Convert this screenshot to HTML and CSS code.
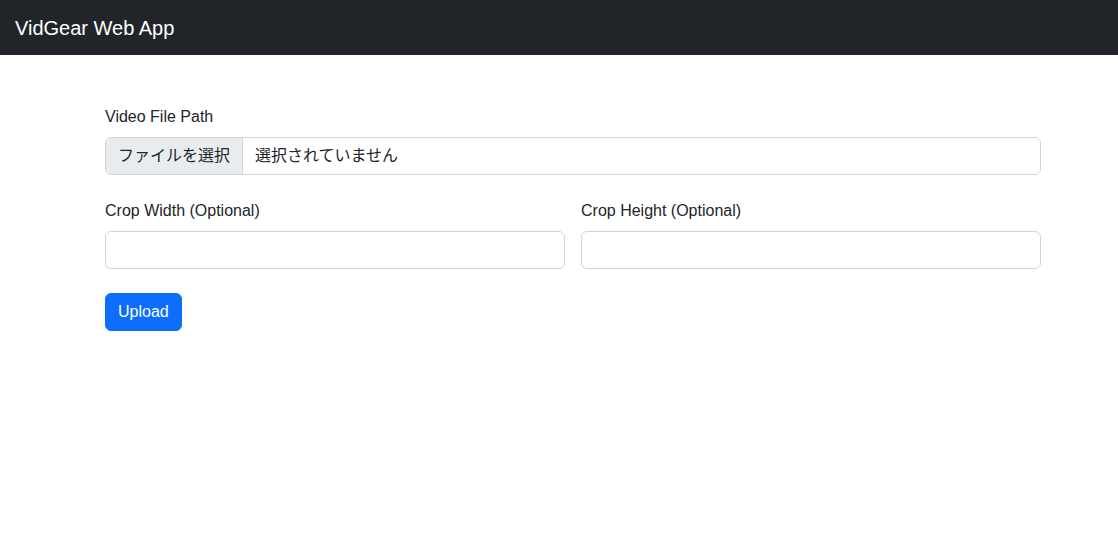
FILE: index.html
```html
<!DOCTYPE html>
<html lang="ja">
<head>
<meta charset="utf-8">
<title>VidGear Web App</title>
<link rel="stylesheet" href="styles.css">
</head>
<body>
<nav class="navbar">
  <span class="brand">VidGear Web App</span>
</nav>
<main class="container">
  <form class="form">
    <div class="field">
      <label class="label">Video File Path</label>
      <div class="file-control">
        <span class="file-btn">ファイルを選択</span>
        <span class="file-name">選択されていません</span>
      </div>
    </div>
    <div class="row">
      <div class="field col">
        <label class="label">Crop Width (Optional)</label>
        <input class="input" type="text">
      </div>
      <div class="field col">
        <label class="label">Crop Height (Optional)</label>
        <input class="input" type="text">
      </div>
    </div>
    <button class="btn" type="button">Upload</button>
  </form>
</main>
</body>
</html>
```
FILE: styles.css
```css
* { box-sizing: border-box; }
html, body { margin: 0; padding: 0; }
body {
  font-family: "Liberation Sans", "Noto Sans CJK JP", Arial, sans-serif;
  font-size: 16px;
  line-height: 24px;
  color: #212529;
  background: #fff;
}
.navbar {
  height: 55px;
  background: #212529;
  display: flex;
  align-items: center;
  padding: 0 15px;
}
.brand {
  color: #fff;
  font-size: 20px;
  line-height: 30px;
}
.container {
  width: 936px;
  margin: 0 0 0 105px;
  padding-top: 50px;
}
.form { display: flex; flex-direction: column; align-items: flex-start; }
.field { display: flex; flex-direction: column; margin-bottom: 24px; width: 100%; }
.label { display: block; margin-bottom: 8px; line-height: 24px; }
.file-control {
  display: flex;
  height: 38px;
  border: 1px solid #ced4da;
  border-radius: 6px;
  overflow: hidden;
  background: #fff;
}
.file-btn {
  display: flex;
  align-items: center;
  padding: 0 12px;
  background: #e9ecef;
  border-right: 1px solid #ced4da;
}
.file-name {
  display: flex;
  align-items: center;
  padding: 0 12px;
}
.row { display: flex; gap: 16px; width: 100%; }
.col { flex: 1; }
.input {
  height: 38px;
  width: 100%;
  border: 1px solid #ced4da;
  border-radius: 6px;
  padding: 6px 12px;
  font: inherit;
}
.btn {
  height: 38px;
  padding: 0 12px;
  background: #0d6efd;
  color: #fff;
  border: 1px solid #0d6efd;
  border-radius: 6px;
  font: inherit;
  font-size: 16px;
}
```
